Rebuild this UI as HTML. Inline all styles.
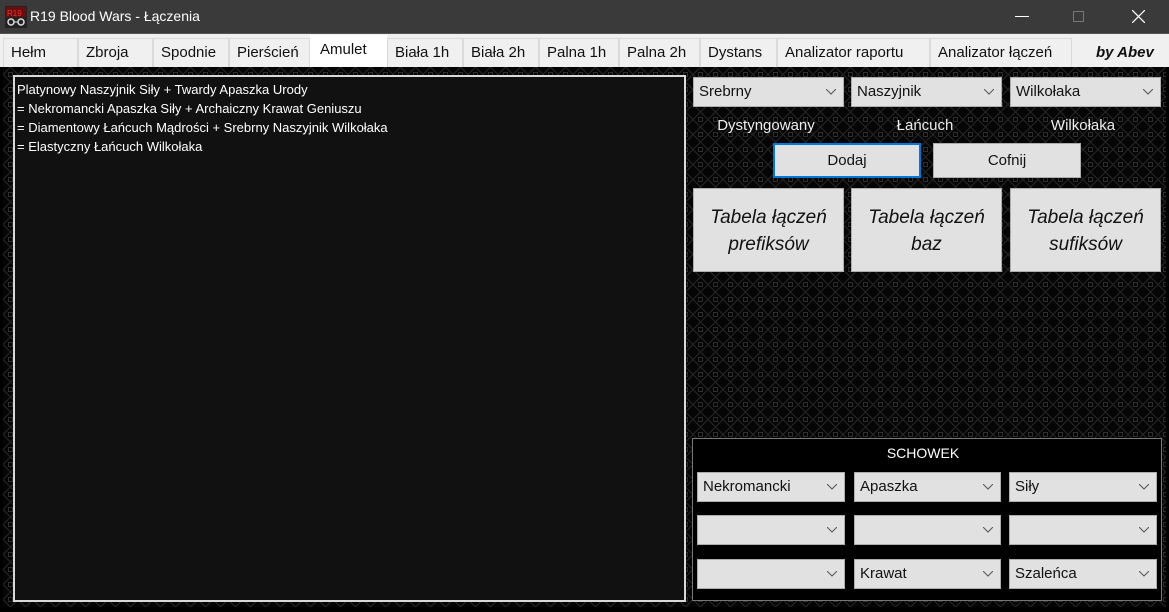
<!DOCTYPE html>
<html><head><meta charset="utf-8"><style>
*{box-sizing:border-box;margin:0;padding:0}
body{width:1169px;height:610px;overflow:hidden;font-family:"Liberation Sans","DejaVu Sans",sans-serif;background:#000;position:relative}
.title{position:absolute;left:0;top:0;width:1169px;height:33px;background:#3a3a3a;color:#fff;font-size:14px}
.tabs{position:absolute;left:0;top:33px;width:1169px;height:34px;background:#f0f0f0;border-top:1px solid #555}
.tab{position:absolute;top:4px;height:29px;border:1px solid #dadada;border-bottom:none;background:#f0f0f0;font-size:15px;color:#111;text-align:left;padding-left:7px;line-height:27px;white-space:nowrap}
.tab.act{background:#fff;top:1px;height:32px;border-color:#fff}
.main{position:absolute;left:3px;top:67px;width:1163px;height:540px;background:#050505}
.box{position:absolute;left:13px;top:75px;width:673px;height:527px;border:2px solid #d8d8d8;background:#111;color:#fff;font-size:13px;line-height:19px;padding:3px 2px}
.dd{position:absolute;height:30px;background:#e1e1e1;border:1px solid #adadad;font-size:15px;color:#111;line-height:28px;padding-left:5px}
.dd svg{position:absolute;right:7px;top:11px}
.lbl{position:absolute;color:#eee;font-size:15px;text-align:center;width:150px}
.btn{position:absolute;background:#e1e1e1;border:1px solid #adadad;font-size:15px;color:#111;text-align:center}
.big{font-style:italic;font-size:19px;line-height:27px;padding-top:15px}
</style></head><body>
<div class="title">
<svg style="position:absolute;left:5px;top:6px" width="22" height="22" viewBox="0 0 22 22"><rect width="22" height="22" fill="#222"/><rect x="1" y="1" width="20" height="10" fill="#6b0d0d"/><text x="2" y="10" font-size="8" fill="#e33" font-family="Liberation Sans">R19</text><circle cx="6" cy="16" r="3" fill="none" stroke="#ddd" stroke-width="1.5"/><circle cx="16" cy="16" r="3" fill="none" stroke="#ddd" stroke-width="1.5"/><line x1="9" y1="16" x2="13" y2="16" stroke="#ddd"/></svg>
<div style="position:absolute;left:30px;top:8px">R19 Blood Wars - Łączenia</div>
<div style="position:absolute;left:1015px;top:16px;width:14px;height:1px;background:#fff"></div>
<div style="position:absolute;left:1073px;top:11px;width:11px;height:11px;border:1px solid #777"></div>
<svg style="position:absolute;left:1132px;top:10px" width="13" height="13"><path d="M0 0L13 13M13 0L0 13" stroke="#fff" stroke-width="1.3"/></svg>
</div>
<div class="tabs">
<div class="tab" style="left:3px;width:75px">Hełm</div>
<div class="tab" style="left:78px;width:75px">Zbroja</div>
<div class="tab" style="left:153px;width:76px">Spodnie</div>
<div class="tab" style="left:229px;width:81px">Pierścień</div>
<div class="tab act" style="left:310px;width:77px;padding-left:9px">Amulet</div>
<div class="tab" style="left:387px;width:76px">Biała 1h</div>
<div class="tab" style="left:463px;width:76px">Biała 2h</div>
<div class="tab" style="left:539px;width:80px">Palna 1h</div>
<div class="tab" style="left:619px;width:81px">Palna 2h</div>
<div class="tab" style="left:700px;width:77px">Dystans</div>
<div class="tab" style="left:777px;width:153px">Analizator raportu</div>
<div class="tab" style="left:930px;width:142px">Analizator łączeń</div>
<div style="position:absolute;left:1096px;top:10px;font-size:15px;font-weight:bold;font-style:italic;color:#111">by Abev</div>
</div>
<div class="main"><svg width="1163" height="540"><defs><pattern id="p" width="15" height="15" patternUnits="userSpaceOnUse"><path d="M0 7.5L7.5 0L15 7.5L7.5 15Z" fill="none" stroke="#262626" stroke-width="1"/><rect x="5.5" y="5.5" width="4" height="4" fill="none" stroke="#2e2e2e"/></pattern></defs><rect width="1163" height="540" fill="url(#p)"/></svg></div>
<div class="box">Platynowy Naszyjnik Siły + Twardy Apaszka Urody<br>= Nekromancki Apaszka Siły + Archaiczny Krawat Geniuszu<br>= Diamentowy Łańcuch Mądrości + Srebrny Naszyjnik Wilkołaka<br>= Elastyczny Łańcuch Wilkołaka</div>

<div class="dd" style="left:693px;top:77px;width:151px">Srebrny<svg width="10" height="6"><path d="M0 0L5 5L10 0" fill="none" stroke="#555"/></svg></div>
<div class="dd" style="left:851px;top:77px;width:151px">Naszyjnik<svg width="10" height="6"><path d="M0 0L5 5L10 0" fill="none" stroke="#555"/></svg></div>
<div class="dd" style="left:1010px;top:77px;width:151px">Wilkołaka<svg width="10" height="6"><path d="M0 0L5 5L10 0" fill="none" stroke="#555"/></svg></div>
<div class="lbl" style="left:691px;top:117px">Dystyngowany</div>
<div class="lbl" style="left:850px;top:117px">Łańcuch</div>
<div class="lbl" style="left:1008px;top:117px">Wilkołaka</div>
<div class="btn" style="left:773px;top:143px;width:148px;height:35px;border:2px solid #0078d7;line-height:31px">Dodaj</div>
<div class="btn" style="left:933px;top:143px;width:148px;height:35px;line-height:33px">Cofnij</div>
<div class="btn big" style="left:693px;top:188px;width:151px;height:84px">Tabela łączeń<br>prefiksów</div>
<div class="btn big" style="left:851px;top:188px;width:151px;height:84px">Tabela łączeń<br>baz</div>
<div class="btn big" style="left:1010px;top:188px;width:151px;height:84px">Tabela łączeń<br>sufiksów</div>

<div style="position:absolute;left:692px;top:438px;width:470px;height:163px;border:1px solid #777;background:#000"></div>
<div class="lbl" style="left:848px;top:445px;color:#fff;font-size:14px">SCHOWEK</div>
<div class="dd" style="left:697px;top:472px;width:148px">Nekromancki<svg width="10" height="6"><path d="M0 0L5 5L10 0" fill="none" stroke="#555"/></svg></div>
<div class="dd" style="left:854px;top:472px;width:147px">Apaszka<svg width="10" height="6"><path d="M0 0L5 5L10 0" fill="none" stroke="#555"/></svg></div>
<div class="dd" style="left:1009px;top:472px;width:148px">Siły<svg width="10" height="6"><path d="M0 0L5 5L10 0" fill="none" stroke="#555"/></svg></div>
<div class="dd" style="left:697px;top:515px;width:148px"><svg width="10" height="6"><path d="M0 0L5 5L10 0" fill="none" stroke="#555"/></svg></div>
<div class="dd" style="left:854px;top:515px;width:147px"><svg width="10" height="6"><path d="M0 0L5 5L10 0" fill="none" stroke="#555"/></svg></div>
<div class="dd" style="left:1009px;top:515px;width:148px"><svg width="10" height="6"><path d="M0 0L5 5L10 0" fill="none" stroke="#555"/></svg></div>
<div class="dd" style="left:697px;top:559px;width:148px"><svg width="10" height="6"><path d="M0 0L5 5L10 0" fill="none" stroke="#555"/></svg></div>
<div class="dd" style="left:854px;top:559px;width:147px">Krawat<svg width="10" height="6"><path d="M0 0L5 5L10 0" fill="none" stroke="#555"/></svg></div>
<div class="dd" style="left:1009px;top:559px;width:148px">Szaleńca<svg width="10" height="6"><path d="M0 0L5 5L10 0" fill="none" stroke="#555"/></svg></div>
</body></html>
